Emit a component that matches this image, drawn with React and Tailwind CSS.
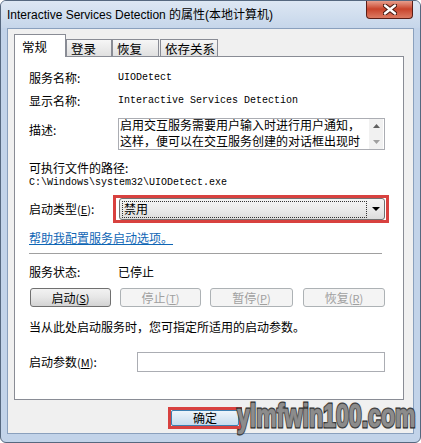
import React from 'react';

const cjk = "font-['Noto_Sans_CJK_SC',sans-serif]";
const mono = "font-['Liberation_Mono','Noto_Sans_CJK_SC',monospace] text-[10px]";

function Key({ k }) {
    return (
        <span className="text-[11px]">(<span className="underline">{k}</span>)</span>
    );
}

function Tab({ label, active, className }) {
    if (active) {
        return (
            <div className={`relative z-10 -mb-px h-[23px] bg-white border border-b-0 border-[#898c95] flex items-center pl-[7px] pt-[3px] text-[12.5px] ${className}`}>
                {label}
            </div>
        );
    }
    return (
        <div className={`h-[17px] bg-gradient-to-b from-[#f6f6f6] to-[#e0e0e0] border border-b-0 border-[#898c95] flex items-center pl-[4px] pt-[2px] text-[12.5px] ${className}`}>
            {label}
        </div>
    );
}

function ServiceButton({ children, disabled, className }) {
    return (
        <div
            className={
                disabled
                    ? `h-[19px] border border-[#adb2b5] rounded-[3px] bg-[#f4f4f4] text-[#a0a0a0] flex items-center justify-center ${className}`
                    : `h-[19px] border border-[#707070] rounded-[3px] bg-gradient-to-b from-[#f2f2f2] via-[#e6e6e6] to-[#d3d3d3] text-black flex items-center justify-center ${className}`
            }
        >
            {children}
        </div>
    );
}

export default function App() {
    return (
        <div className={`relative w-[421px] h-[443px] bg-[#c2d3e9] border border-[#56687f] rounded-[6px] flex flex-col overflow-hidden ${cjk}`}>

            {/* title bar */}
            <div className="h-[27px] flex items-start justify-between pl-[6px] pr-[7px] bg-gradient-to-b from-[#dde7f3] to-[#c6d6ea]">
                <div className="pt-[7px] text-[12px] leading-[15px] text-black font-['Liberation_Sans','Noto_Sans_CJK_SC',sans-serif]">
                    Interactive Services Detection 的属性(本地计算机)
                </div>
                <div className="-mt-px w-[47px] h-[19px] rounded-b-[4px] border border-t-0 border-[#5a1e16] bg-gradient-to-b from-[#eaa898] via-[#c8432b] to-[#dc7a62] flex items-center justify-center">
                    <svg width="14" height="11" viewBox="0 0 14 11">
                        <path d="M2 1.5 L12 9.5 M12 1.5 L2 9.5" stroke="#4a1a12" strokeWidth="4.5" strokeLinecap="round" />
                        <path d="M2 1.5 L12 9.5 M12 1.5 L2 9.5" stroke="#ffffff" strokeWidth="2.4" strokeLinecap="round" />
                    </svg>
                </div>
            </div>

            {/* dialog body */}
            <div className="flex-1 mx-[6px] mb-[8px] bg-[#f0f0f0] border border-[#8aa0bd] flex flex-col pl-[6px] pr-[9px] pt-[5px]">

                {/* tabs */}
                <div className="flex items-end h-[22px]">
                    <Tab label="常规" active className="w-[52px]" />
                    <Tab label="登录" className="w-[46px]" />
                    <Tab label="恢复" className="w-[47px]" />
                    <Tab label="依存关系" className="w-[58px] ml-[1px]" />
                </div>

                {/* tab panel */}
                <div className="w-[390px] h-[344px] bg-white border border-[#898c95] flex flex-col pl-[14px] pt-[13px] text-[12px] leading-[16px] text-black">

                    <div className="flex items-center h-[16px]">
                        <span className="w-[89px]">服务名称:</span>
                        <span className={mono}>UIODetect</span>
                    </div>

                    <div className="flex items-center h-[16px] mt-[7px]">
                        <span className="w-[89px]">显示名称:</span>
                        <span className={mono}>Interactive Services Detection</span>
                    </div>

                    {/* description */}
                    <div className="flex items-start mt-[9px]">
                        <span className="w-[89px] pt-[4px]">描述:</span>
                        <div className="w-[267px] h-[32px] border border-[#abadb3] flex">
                            <div className="flex-1 pl-[1px]">
                                <div className="-mt-[2px] leading-[16px] whitespace-nowrap">
                                    <div>启用交互服务需要用户输入时进行用户通知，</div>
                                    <div>这样，便可以在交互服务创建的对话框出现时</div>
                                </div>
                            </div>
                            <div className="w-[14px] bg-[#f1f1f1] flex flex-col items-center justify-between py-[5px] mr-[1px]">
                                <svg width="7" height="4" viewBox="0 0 7 4"><path d="M0 4 L3.5 0 L7 4 Z" fill="#606060" /></svg>
                                <svg width="7" height="4" viewBox="0 0 7 4"><path d="M0 0 L3.5 4 L7 0 Z" fill="#a0a0a0" /></svg>
                            </div>
                        </div>
                    </div>

                    <div className="mt-[10px] h-[16px]">可执行文件的路径:</div>
                    <div className={`${mono} leading-[14px]`}>C:\Windows\system32\UIODetect.exe</div>

                    {/* startup type */}
                    <div className="flex items-center mt-[5px]">
                        <span className="w-[84px]">启动类型<Key k="E" />:</span>
                        <div className="w-[276px] h-[28px] border-[3px] border-[#d8413f] pl-[3px] pr-[1px]">
                            <div className="h-full border border-[#707070] rounded-[3px] bg-gradient-to-b from-[#f4f4f4] via-[#ebebeb] to-[#dcdcdc] flex items-center">
                                <div className="ml-[2px] w-[245px] h-[17px] border border-dotted border-[#333] flex items-center pl-[1px]">
                                    禁用
                                </div>
                                <div className="flex-1 flex items-center justify-center">
                                    <svg width="8" height="4" viewBox="0 0 8 4"><path d="M0 0 L8 0 L4 4 Z" fill="#000" /></svg>
                                </div>
                            </div>
                        </div>
                    </div>

                    <div className="mt-[7px] h-[16px] text-[#0f66b5] underline">帮助我配置服务启动选项。</div>

                    <div className="mt-[7px] w-[353px] h-px bg-[#a0a0a0]" />

                    <div className="flex items-center h-[16px] mt-[10px]">
                        <span className="w-[89px]">服务状态:</span>
                        <span>已停止</span>
                    </div>

                    <div className="flex mt-[8px] ml-[1px]">
                        <ServiceButton className="w-[81px]">启动<Key k="S" /></ServiceButton>
                        <ServiceButton disabled className="w-[81px] ml-[9px]">停止<Key k="T" /></ServiceButton>
                        <ServiceButton disabled className="w-[83px] ml-[9px]">暂停<Key k="P" /></ServiceButton>
                        <ServiceButton disabled className="w-[82px] ml-[10px]">恢复<Key k="R" /></ServiceButton>
                    </div>

                    <div className="mt-[12px] h-[16px]">当从此处启动服务时，您可指定所适用的启动参数。</div>

                    <div className="flex items-center mt-[17px]">
                        <span className="w-[108px]">启动参数<Key k="M" />:</span>
                        <div className="w-[248px] h-[20px] border border-[#abadb3] bg-white" />
                    </div>
                </div>

                {/* OK button, outlined in red */}
                <div className="mt-[7px] ml-[154px] w-[74px] h-[22px] border-[3px] border-[#d8413f]">
                    <div className="h-full border border-[#3c7fb1] rounded-[2px] bg-gradient-to-b from-[#eef5fb] to-[#c6dcee] flex items-center justify-center text-[12px] leading-[14px]">
                        确定
                    </div>
                </div>
            </div>

            {/* watermark */}
            <div className="absolute left-[236px] top-[397px] origin-left scale-x-[0.68] text-[34px] leading-[34px] font-bold whitespace-nowrap font-['Liberation_Sans',sans-serif] text-[#8c8c8c] [-webkit-text-stroke:3px_#262626] [paint-order:stroke_fill] [text-shadow:0_0_3px_#a8a8a8]">
                ylmfwin100.com
            </div>
        </div>
    );
}
